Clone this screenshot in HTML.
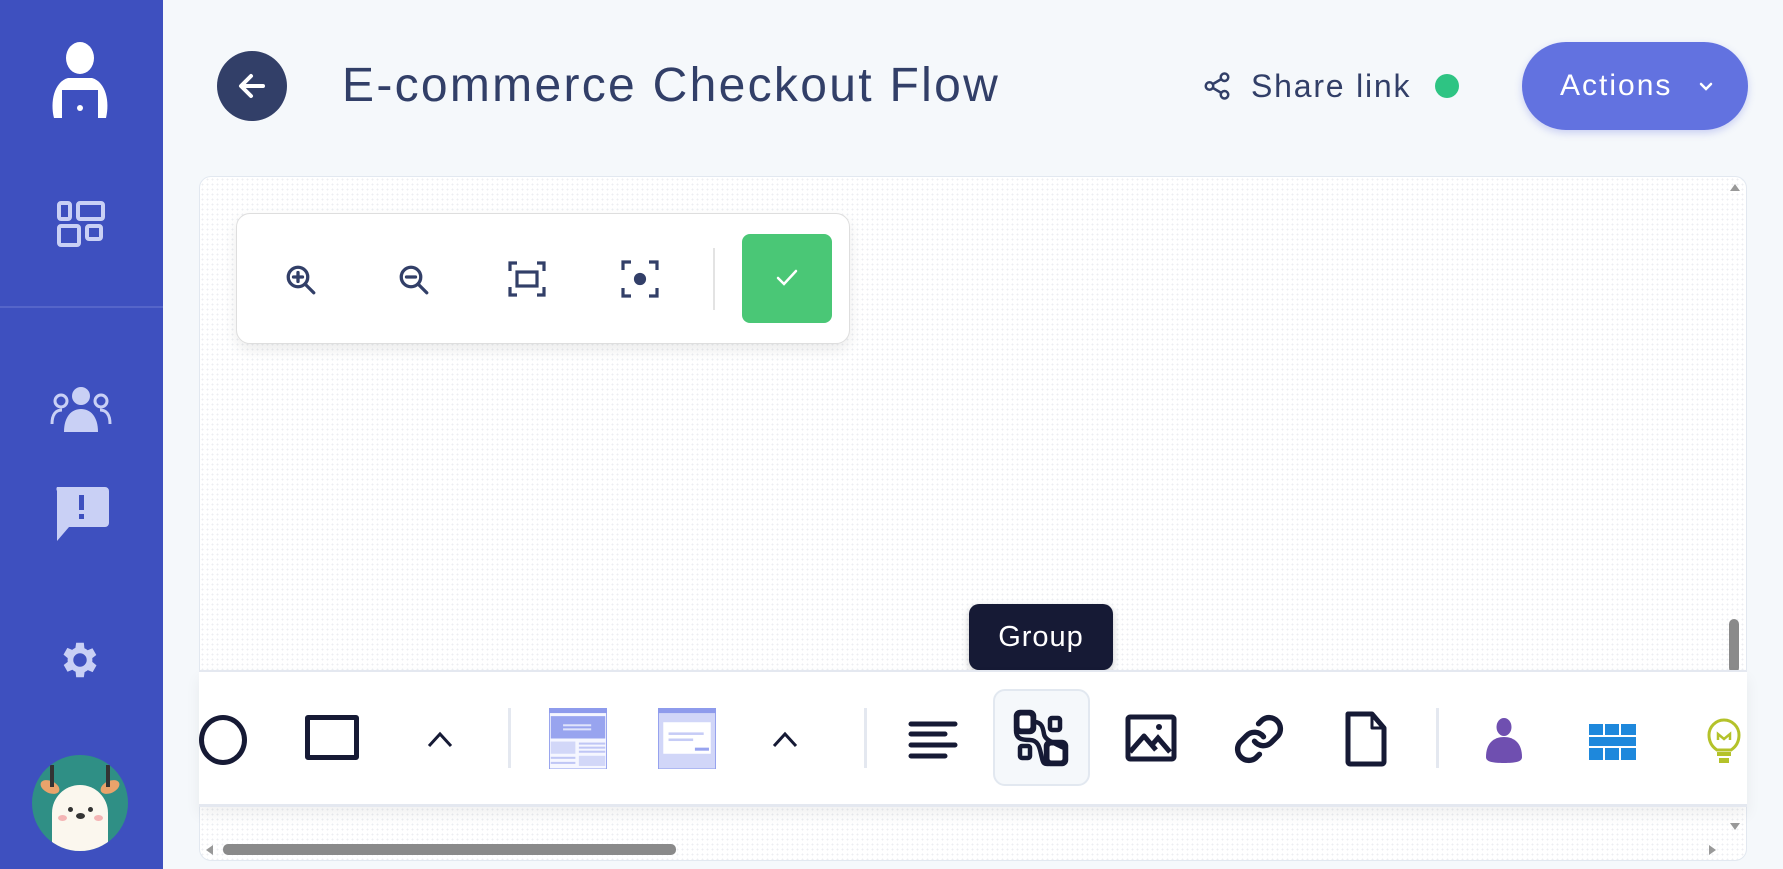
<!DOCTYPE html>
<html><head><meta charset="utf-8"><style>
*{box-sizing:border-box;margin:0;padding:0}
body{width:1783px;height:869px;overflow:hidden;background:#f5f8fb;font-family:"Liberation Sans",sans-serif;position:relative}
.side{position:absolute;left:0;top:0;width:163px;height:869px;background:#3e50bf}
.abs{position:absolute}
.canvas{position:absolute;left:199px;top:176px;width:1548px;height:685px;background:#fff;border:1px solid #e2e8f0;border-radius:12px;overflow:hidden;
background-image:radial-gradient(#eceef2 0.8px,transparent 0.9px);background-size:5px 5px}
</style></head><body>
<div class="side">
  <svg class="abs" style="left:48px;top:42px" width="64" height="76" viewBox="0 0 64 76">
    <ellipse cx="32" cy="16" rx="14" ry="16" fill="#fff"/>
    <path d="M6 76 C2 60 6 40 20 36 L44 36 C58 40 62 60 58 76 L50 76 L50 48 L14 48 L14 76 Z" fill="#fff"/>
    <circle cx="32" cy="66" r="3" fill="#fff"/>
  </svg>
  <svg class="abs" style="left:56px;top:200px" width="50" height="48" viewBox="0 0 50 48" fill="none" stroke="#c9d0f5" stroke-width="4">
    <rect x="3" y="3" width="11" height="16" rx="2"/><rect x="22" y="3" width="25" height="16" rx="2"/>
    <rect x="3" y="26" width="20" height="19" rx="2"/><rect x="31" y="26" width="14" height="13" rx="2"/>
  </svg>
  <div class="abs" style="left:0;top:306px;width:163px;height:2px;background:#5565c9"></div>
  <svg class="abs" style="left:50px;top:386px" width="62" height="48" viewBox="0 0 62 48" fill="#c9d0f5">
    <circle cx="31" cy="10" r="9"/><circle cx="11" cy="15" r="6" fill="none" stroke="#c9d0f5" stroke-width="3"/><circle cx="51" cy="15" r="6" fill="none" stroke="#c9d0f5" stroke-width="3"/>
    <path d="M14 46 C14 30 22 23 31 23 C40 23 48 30 48 46 Z"/>
    <path d="M2 38 C2 28 6 24 12 24" stroke="#c9d0f5" stroke-width="3" fill="none"/><path d="M60 38 C60 28 56 24 50 24" stroke="#c9d0f5" stroke-width="3" fill="none"/>
  </svg>
  <svg class="abs" style="left:53px;top:487px" width="56" height="54" viewBox="0 0 56 54">
    <path d="M4 0 H52 A4 4 0 0 1 56 4 V36 A4 4 0 0 1 52 40 H16 L4 54 V4 A4 4 0 0 1 4 0Z" fill="#c9d0f5"/>
    <rect x="26" y="8" width="5" height="15" fill="#3e50bf"/><rect x="26" y="27" width="5" height="5" fill="#3e50bf"/>
  </svg>
  <svg class="abs" style="left:57px;top:637px" width="46" height="46" viewBox="0 0 24 24"><path fill="#c9d0f5" d="M19.4 13a7.5 7.5 0 0 0 0-2l2.1-1.6-2-3.5-2.5 1a7 7 0 0 0-1.7-1L15 3h-4l-.4 2.7a7 7 0 0 0-1.7 1l-2.5-1-2 3.5L6.6 11a7.5 7.5 0 0 0 0 2l-2.1 1.6 2 3.5 2.5-1a7 7 0 0 0 1.7 1L11 21h4l.4-2.7a7 7 0 0 0 1.7-1l2.5 1 2-3.5zM13 15.5a3.5 3.5 0 1 1 0-7 3.5 3.5 0 0 1 0 7z" transform="translate(-1 0)"/></svg>
  <div class="abs" style="left:32px;top:755px;width:96px;height:96px;border-radius:50%;background:#2f8f85;overflow:hidden">
    <div class="abs" style="left:8px;top:26px;width:20px;height:12px;border-radius:50%;background:#e9a36b;transform:rotate(25deg)"></div>
    <div class="abs" style="left:68px;top:26px;width:20px;height:12px;border-radius:50%;background:#e9a36b;transform:rotate(-25deg)"></div>
    <div class="abs" style="left:20px;top:30px;width:56px;height:70px;border-radius:28px 28px 10px 10px;background:#fbf7ee"></div>
    <div class="abs" style="left:18px;top:10px;width:4px;height:22px;background:#333"></div>
    <div class="abs" style="left:74px;top:10px;width:4px;height:22px;background:#333"></div>
    <div class="abs" style="left:36px;top:52px;width:5px;height:5px;border-radius:50%;background:#333"></div>
    <div class="abs" style="left:56px;top:52px;width:5px;height:5px;border-radius:50%;background:#333"></div>
    <div class="abs" style="left:44px;top:58px;width:9px;height:6px;border-radius:50%;background:#333"></div>
    <div class="abs" style="left:26px;top:60px;width:9px;height:6px;border-radius:50%;background:#f4b5b5"></div>
    <div class="abs" style="left:62px;top:60px;width:9px;height:6px;border-radius:50%;background:#f4b5b5"></div>
  </div>
</div>

<div class="abs" style="left:217px;top:51px;width:70px;height:70px;border-radius:50%;background:#323f68"></div>
<svg class="abs" style="left:232px;top:66px" width="40" height="40" viewBox="0 0 40 40" fill="none" stroke="#fff" stroke-width="4" stroke-linecap="round" stroke-linejoin="round"><path d="M31 20H10M19 10 9 20l10 10"/></svg>
<div class="abs" style="left:342px;top:58px;font-size:48px;color:#323f68;line-height:56px;letter-spacing:2.3px;white-space:nowrap">E-commerce Checkout Flow</div>

<svg class="abs" style="left:1202px;top:71px" width="30" height="30" viewBox="0 0 24 24" fill="none" stroke="#323f68" stroke-width="2"><circle cx="18" cy="5" r="3"/><circle cx="6" cy="12" r="3"/><circle cx="18" cy="19" r="3"/><path d="M8.6 13.5l6.8 4M15.4 6.5l-6.8 4"/></svg>
<div class="abs" style="left:1251px;top:68px;font-size:32px;color:#323f68;line-height:36px;letter-spacing:1.8px;white-space:nowrap">Share link</div>
<div class="abs" style="left:1435px;top:74px;width:24px;height:24px;border-radius:50%;background:#2ec483"></div>
<div class="abs" style="left:1522px;top:42px;width:226px;height:88px;border-radius:44px;background:#6272e0;box-shadow:0 3px 8px rgba(98,114,224,.3)"></div>
<div class="abs" style="left:1560px;top:68px;font-size:30px;color:#fff;line-height:36px;letter-spacing:2px">Actions</div>
<svg class="abs" style="left:1696px;top:76px" width="20" height="20" viewBox="0 0 20 20" fill="none" stroke="#fff" stroke-width="2.5" stroke-linecap="round"><path d="M5 8l5 5 5-5"/></svg>

<div class="canvas"></div>
<svg class="abs" style="left:1727px;top:180px" width="16" height="14"><path d="M3 11 L8 4 L13 11Z" fill="#999"/></svg>
<div class="abs" style="left:1729px;top:619px;width:10px;height:54px;border-radius:5px;background:#8a8a8a"></div>
<svg class="abs" style="left:1727px;top:820px" width="16" height="14"><path d="M3 3 L8 10 L13 3Z" fill="#999"/></svg>
<svg class="abs" style="left:202px;top:842px" width="14" height="16"><path d="M11 3 L4 8 L11 13Z" fill="#999"/></svg>
<div class="abs" style="left:223px;top:844px;width:453px;height:11px;border-radius:5px;background:#8a8a8a"></div>
<svg class="abs" style="left:1706px;top:842px" width="14" height="16"><path d="M3 3 L10 8 L3 13Z" fill="#999"/></svg>

<div class="abs" style="left:236px;top:213px;width:614px;height:131px;background:#fff;border:1px solid #dedede;border-radius:14px;box-shadow:0 6px 14px rgba(0,0,0,.08)"></div>
<svg class="abs" style="left:283px;top:262px" width="36" height="36" viewBox="0 0 24 24" fill="none" stroke="#323f68" stroke-width="2.2" stroke-linecap="round"><circle cx="10" cy="10" r="6.5"/><path d="M15 15l5.5 5.5M10 7v6M7 10h6"/></svg>
<svg class="abs" style="left:396px;top:262px" width="36" height="36" viewBox="0 0 24 24" fill="none" stroke="#323f68" stroke-width="2.2" stroke-linecap="round"><circle cx="10" cy="10" r="6.5"/><path d="M15 15l5.5 5.5M7 10h6"/></svg>
<svg class="abs" style="left:508px;top:261px" width="38" height="36" viewBox="0 0 38 36" fill="none" stroke="#323f68" stroke-width="3.2"><path d="M2 10V2h7M29 2h7v8M36 26v8h-7M9 34H2v-8"/><rect x="9" y="11" width="20" height="14"/></svg>
<svg class="abs" style="left:621px;top:260px" width="38" height="38" viewBox="0 0 38 38" fill="none" stroke="#323f68" stroke-width="3.2"><path d="M2 10V2h8M28 2h8v8M36 28v8h-8M10 36H2v-8"/><circle cx="19" cy="19" r="4.5" fill="#323f68"/></svg>
<div class="abs" style="left:713px;top:248px;width:2px;height:62px;background:#e3e3e3"></div>
<div class="abs" style="left:742px;top:234px;width:90px;height:89px;border-radius:8px;background:#4ac776"></div>
<svg class="abs" style="left:773px;top:266px" width="28" height="24" viewBox="0 0 28 24" fill="none" stroke="#fff" stroke-width="2.5" stroke-linecap="round"><path d="M5 12l6 6L23 5"/></svg>

<div class="abs" style="left:969px;top:604px;width:144px;height:66px;border-radius:10px;background:#161a35;color:#fff;font-size:29px;text-align:center;line-height:66px;letter-spacing:1px;box-shadow:0 3px 8px rgba(0,0,0,.2)">Group</div>
<svg class="abs" style="left:1031px;top:669px" width="20" height="13"><path d="M0 0h20L10 12Z" fill="#161a35"/></svg>

<div class="abs" style="left:199px;top:670px;width:1548px;height:137px;background:#fff;border-top:2px solid #e4e8f0;border-bottom:3px solid #e4e8f0;box-shadow:0 8px 14px rgba(0,0,0,.06)"></div>
<div class="abs" style="left:199px;top:715px;width:48px;height:50px;border:5px solid #161a35;border-radius:50%"></div>
<div class="abs" style="left:305px;top:715px;width:54px;height:45px;border:5px solid #161a35;border-radius:3px"></div>
<svg class="abs" style="left:424px;top:728px" width="32" height="22" viewBox="0 0 32 22" fill="none" stroke="#161a35" stroke-width="3"><path d="M5 18L16 6l11 12"/></svg>
<svg class="abs" style="left:769px;top:728px" width="32" height="22" viewBox="0 0 32 22" fill="none" stroke="#161a35" stroke-width="3"><path d="M5 18L16 6l11 12"/></svg>
<div class="abs" style="left:508px;top:708px;width:3px;height:60px;background:#e4e8f0"></div>
<div class="abs" style="left:864px;top:708px;width:3px;height:60px;background:#e4e8f0"></div>
<div class="abs" style="left:1436px;top:708px;width:3px;height:60px;background:#e4e8f0"></div>
<svg class="abs" style="left:549px;top:708px" width="58" height="61" viewBox="0 0 33 60" preserveAspectRatio="none"><rect x="0" y="0" width="33" height="60" fill="#f5f6ff" stroke="#8e9bec"/><rect x="0" y="0" width="33" height="5" fill="#8e9bec"/><rect x="1" y="8" width="31" height="22" fill="#98a4ef"/><rect x="8" y="16" width="16" height="2" fill="#dfe3fb"/><rect x="8" y="20" width="16" height="2" fill="#dfe3fb"/><rect x="1" y="33" width="14" height="12" fill="#d2d7f8"/><rect x="17" y="34" width="15" height="2" fill="#bfc6f5"/><rect x="17" y="38" width="15" height="2" fill="#bfc6f5"/><rect x="17" y="42" width="15" height="2" fill="#bfc6f5"/><rect x="1" y="48" width="14" height="2" fill="#bfc6f5"/><rect x="1" y="53" width="14" height="2" fill="#bfc6f5"/><rect x="17" y="47" width="15" height="10" fill="#d2d7f8"/></svg>
<svg class="abs" style="left:658px;top:708px" width="58" height="61" viewBox="0 0 33 60" preserveAspectRatio="none"><rect x="0" y="0" width="33" height="60" fill="#d1d6f8" stroke="#8e9bec"/><rect x="0" y="0" width="33" height="5" fill="#8e9bec"/><rect x="3" y="14" width="27" height="31" fill="#fff"/><rect x="6" y="24" width="20" height="2.5" fill="#c6ccf6"/><rect x="6" y="30" width="14" height="2.5" fill="#c6ccf6"/><rect x="21" y="39" width="8" height="3" fill="#98a4ef"/></svg>
<svg class="abs" style="left:908px;top:720px" width="50" height="40" viewBox="0 0 50 40" stroke="#161a35" stroke-width="5" stroke-linecap="round"><path d="M3 4h44M3 14h34M3 25h44M3 36h34"/></svg>
<div class="abs" style="left:993px;top:689px;width:97px;height:97px;border-radius:12px;background:#f5f8fb;border:2px solid #e2e8f0"></div>
<svg class="abs" style="left:1012px;top:708px" width="58" height="60" viewBox="0 0 58 60" fill="none" stroke="#161a35" stroke-width="4.5" stroke-linecap="round">
<rect x="4" y="4" width="18" height="20" rx="4" fill="#161a35"/><rect x="7.5" y="7.5" width="11" height="13" rx="2" fill="#fff" stroke="none"/>
<rect x="38" y="10" width="10" height="12" rx="2"/><rect x="8" y="38" width="10" height="12" rx="2"/>
<rect x="34" y="34" width="20" height="22" rx="4" fill="#161a35"/><rect x="37.5" y="37.5" width="13" height="15" rx="2" fill="#fff" stroke="none"/>
<path d="M4 22 C4 30 8 32 18 32 C28 32 28 44 30 50 C31 55 32 56 36 56"/><path d="M22 14 C30 14 31 20 32 26 C33 32 40 34 52 40"/></svg>
<svg class="abs" style="left:1125px;top:714px" width="52" height="48" viewBox="0 0 52 48" fill="none" stroke="#161a35" stroke-width="5"><rect x="3" y="3" width="46" height="42" rx="2"/><path d="M5 38l14-16 12 14" stroke-linejoin="round"/><path d="M26 32l7-8 12 14"/><circle cx="34" cy="13" r="3" fill="#161a35" stroke="none"/></svg>
<svg class="abs" style="left:1231px;top:712px" width="56" height="54" viewBox="0 0 24 24" fill="none" stroke="#161a35" stroke-width="2.4" stroke-linecap="round"><path d="M10 13a5 5 0 0 0 7.5.5l3-3a5 5 0 0 0-7-7l-1.7 1.7"/><path d="M14 11a5 5 0 0 0-7.5-.5l-3 3a5 5 0 0 0 7 7l1.7-1.7"/></svg>
<svg class="abs" style="left:1344px;top:710px" width="44" height="58" viewBox="0 0 44 58" fill="none" stroke="#161a35" stroke-width="5" stroke-linejoin="round"><path d="M4 4h24l12 14v34a2 2 0 0 1-2 2H6a2 2 0 0 1-2-2z"/><path d="M28 4v14h12" stroke-width="3"/></svg>
<svg class="abs" style="left:1484px;top:717px" width="40" height="46" viewBox="0 0 40 46" fill="#6f4fb0"><ellipse cx="20" cy="10" rx="7.5" ry="9"/><path d="M2 40 C2 26 10 20 20 20 C30 20 38 26 38 40 C38 44 34 46 20 46 C6 46 2 44 2 40Z"/></svg>
<svg class="abs" style="left:1589px;top:724px" width="47" height="36" viewBox="0 0 47 36" fill="#1e88dc"><rect x="0" y="0" width="14" height="11"/><rect x="16" y="0" width="14" height="11"/><rect x="32" y="0" width="15" height="11"/><rect x="0" y="13" width="47" height="9"/><rect x="0" y="24" width="14" height="12"/><rect x="16" y="24" width="14" height="12"/><rect x="32" y="24" width="15" height="12"/></svg>
<svg class="abs" style="left:1707px;top:718px" width="34" height="48" viewBox="0 0 34 48" fill="none" stroke="#b4c22a" stroke-width="3"><path d="M10 32 C4 28 2 23 2 17 A15 15 0 0 1 32 17 C32 23 30 28 24 32 Z"/><path d="M11 22v-6l6 5 6-5v6" stroke-width="2.5"/><rect x="10" y="34" width="14" height="4" fill="#b4c22a" stroke="none"/><rect x="12" y="40" width="10" height="5" fill="#b4c22a" stroke="none"/></svg>
</body></html>
